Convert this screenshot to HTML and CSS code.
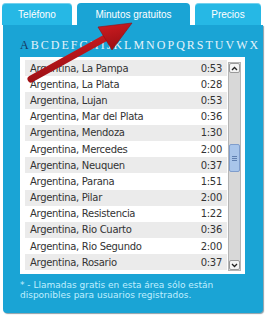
FILE: index.html
```html
<!DOCTYPE html>
<html lang="es">
<head>
<meta charset="utf-8">
<title>Minutos gratuitos</title>
<link rel="stylesheet" href="styles.css">
</head>
<body>
<div class="page">
  <div class="tabs">
    <div class="tab tab-tel">Teléfono</div>
    <div class="tab tab-min active">Minutos gratuitos</div>
    <div class="tab tab-pre">Precios</div>
  </div>
  <div class="panel">
    <div class="letters"><span class="cur">A</span><span>B</span><span>C</span><span>D</span><span>E</span><span>F</span><span>G</span><span>H</span><span>I</span><span>J</span><span>K</span><span>L</span><span>M</span><span>N</span><span>O</span><span>P</span><span>Q</span><span>R</span><span>S</span><span>T</span><span>U</span><span>V</span><span>W</span><span>X</span></div>
    <div class="listbox">
      <div class="rows">
        <div class="row"><span>Argentina, La Pampa</span><span>0:53</span></div>
        <div class="row"><span>Argentina, La Plata</span><span>0:28</span></div>
        <div class="row"><span>Argentina, Lujan</span><span>0:53</span></div>
        <div class="row"><span>Argentina, Mar del Plata</span><span>0:36</span></div>
        <div class="row"><span>Argentina, Mendoza</span><span>1:30</span></div>
        <div class="row"><span>Argentina, Mercedes</span><span>2:00</span></div>
        <div class="row"><span>Argentina, Neuquen</span><span>0:37</span></div>
        <div class="row"><span>Argentina, Parana</span><span>1:51</span></div>
        <div class="row"><span>Argentina, Pilar</span><span>2:00</span></div>
        <div class="row"><span>Argentina, Resistencia</span><span>1:22</span></div>
        <div class="row"><span>Argentina, Rio Cuarto</span><span>0:36</span></div>
        <div class="row"><span>Argentina, Rio Segundo</span><span>2:00</span></div>
        <div class="row"><span>Argentina, Rosario</span><span>0:37</span></div>
      </div>
      <div class="scrollbar">
        <div class="sb-btn"><svg width="7" height="5" viewBox="0 0 7 5"><path d="M1 4 L3.5 1.5 L6 4" fill="none" stroke="#222" stroke-width="1.3"/></svg></div>
        <div class="sb-track"><div class="sb-thumb"><i></i><i></i><i></i></div></div>
        <div class="sb-btn"><svg width="7" height="5" viewBox="0 0 7 5"><path d="M1 1 L3.5 3.5 L6 1" fill="none" stroke="#222" stroke-width="1.3"/></svg></div>
      </div>
    </div>
    <p class="note">* - Llamadas gratis en esta área sólo están<br>disponibles para usuarios registrados.</p>
  </div>
  <svg class="arrow" width="266" height="320" viewBox="0 0 266 320">
    <defs>
      <linearGradient id="ar" x1="0" y1="0" x2="0.35" y2="1">
        <stop offset="0" stop-color="#d21d22"/>
        <stop offset="1" stop-color="#9c0f14"/>
      </linearGradient>
    </defs>
    <line x1="31" y1="79" x2="107" y2="37" stroke="url(#ar)" stroke-width="7" stroke-linecap="round"/>
    <polygon points="132,23 98,27 112,50" fill="url(#ar)" stroke="#8e0c10" stroke-width="0.6" stroke-linejoin="round"/>
  </svg>
</div>
</body>
</html>
```
FILE: styles.css
```css
html, body {
  margin: 0;
  padding: 0;
  background: #ffffff;
}

.page {
  position: relative;
  width: 266px;
  height: 320px;
  overflow: hidden;
}

.tabs {
  display: flex;
  gap: 5px;
  padding: 3px 0 0 2px;
  height: 22px;
}

.tab {
  height: 22px;
  box-sizing: border-box;
  display: flex;
  align-items: center;
  justify-content: center;
  padding-top: 1px;
  background: #26b8e5;
  border-radius: 4px 4px 0 0;
  box-shadow: inset 0 1px 0 rgba(255, 255, 255, 0.35);
  color: #ffffff;
  font-family: "Liberation Sans", Arial, sans-serif;
  font-size: 10px;
}

.tab-tel { width: 70px; }
.tab-min { width: 113px; }
.tab-pre { width: 66px; }

.tab.active {
  background: #1aa4d5;
  box-shadow: none;
}

.panel {
  margin-left: 3px;
  width: 260px;
  height: 288px;
  box-sizing: border-box;
  padding: 13px 0 0 17px;
  background: #1aa4d5;
  border-radius: 0 0 4px 4px;
  box-shadow: 1px 1px 1px rgba(0, 40, 60, 0.45);
  overflow: hidden;
}

.letters {
  font-family: "Liberation Serif", "Times New Roman", serif;
  font-size: 12px;
  line-height: 14px;
  letter-spacing: 2px;
  color: #e4f3fa;
  white-space: nowrap;
}

.letters .cur {
  color: #17365f;
}

.listbox {
  margin-top: 5px;
  width: 225px;
  height: 217px;
  box-sizing: border-box;
  padding: 3px 4px 0 5px;
  background: #ffffff;
  display: flex;
  gap: 1px;
}

.rows {
  width: 202px;
  height: 211px;
  overflow: hidden;
}

.row {
  height: 16.2px;
  display: flex;
  justify-content: space-between;
  align-items: center;
  padding: 0 5px;
  font-family: "DejaVu Sans", sans-serif;
  font-size: 10px;
  letter-spacing: -0.3px;
  color: #333333;
  background: #ffffff;
}

.row:nth-child(odd) {
  background: #ebebeb;
}

.scrollbar {
  margin-top: 2px;
  width: 13px;
  height: 209px;
  box-sizing: border-box;
  border: 1px solid #b4b4b4;
  background: #d8d8d8;
  display: flex;
  flex-direction: column;
}

.sb-btn {
  height: 10px;
  box-sizing: border-box;
  border: 1px solid #9a9a9a;
  border-radius: 2px;
  background: #f4f4f4;
  display: flex;
  align-items: center;
  justify-content: center;
}

.sb-track {
  flex: 1;
  padding-top: 71px;
}

.sb-thumb {
  height: 28px;
  box-sizing: border-box;
  border: 1px solid #7f9dcc;
  border-radius: 2px;
  background: #a9c5ea;
  display: flex;
  flex-direction: column;
  align-items: center;
  justify-content: center;
  gap: 1px;
}

.sb-thumb i {
  display: block;
  width: 5px;
  height: 1px;
  background: #5f7fb0;
}

.note {
  margin: 6px 0 0 0;
  font-family: "DejaVu Sans", sans-serif;
  font-size: 9px;
  line-height: 10px;
  color: #c0efff;
}

.arrow {
  position: absolute;
  left: 0;
  top: 0;
  pointer-events: none;
}
```
